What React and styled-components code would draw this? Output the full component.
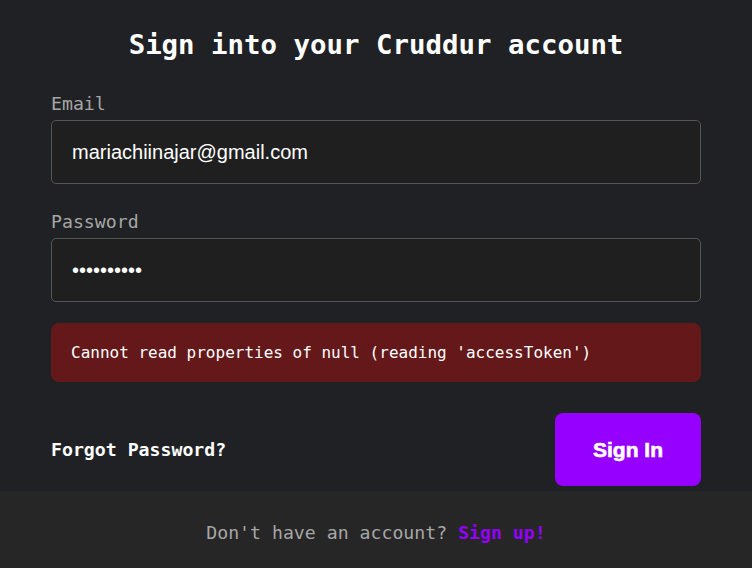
import React from "react";
import styled, { createGlobalStyle } from "styled-components";

const Global = createGlobalStyle`
  html, body { margin: 0; padding: 0; background: #202124; }
  body { font-family: "DejaVu Sans Mono", "Liberation Mono", monospace; }
  * { box-sizing: border-box; }
`;

const Page = styled.div`
  width: 752px;
  display: flex;
  flex-direction: column;
  background: #202124;
`;

const Form = styled.form`
  display: flex;
  flex-direction: column;
  padding: 25px 51px 5px;
`;

const Title = styled.h2`
  margin: 0 0 28px;
  text-align: center;
  color: #ffffff;
  font-size: 27.4px;
  font-weight: bold;
  line-height: 40px;
`;

const Field = styled.div`
  display: flex;
  flex-direction: column;
  gap: 5px;
  margin-bottom: ${(p) => p.$space}px;
`;

const Label = styled.label`
  color: #a6a6a6;
  font-size: 18.2px;
  line-height: 22px;
`;

const Input = styled.input`
  height: 64px;
  width: 100%;
  background: #1f1f1f;
  border: 1px solid #555555;
  border-radius: 5px;
  padding: 0 20px;
  color: #ffffff;
  font-family: "Liberation Sans", Arial, sans-serif;
  font-size: 20px;
  outline: none;
`;

const ErrorBox = styled.div`
  height: 59px;
  background: #65181a;
  border-radius: 8px;
  display: flex;
  align-items: center;
  padding: 0 20px;
  color: #ffffff;
  font-size: 16px;
`;

const Actions = styled.div`
  display: flex;
  justify-content: space-between;
  align-items: center;
  margin-top: 31px;
`;

const Forgot = styled.a`
  color: #ffffff;
  font-weight: bold;
  font-size: 18.2px;
  text-decoration: none;
`;

const Button = styled.button`
  width: 146px;
  height: 73px;
  background: #9500ff;
  border: none;
  border-radius: 8px;
  color: #ffffff;
  font-family: "Liberation Sans", Arial, sans-serif;
  font-weight: 900;
  font-size: 21px;
  -webkit-text-stroke: 0.6px #fff;
`;

const Footer = styled.div`
  height: 78px;
  padding-top: 5px;
  background: #262626;
  display: flex;
  align-items: center;
  justify-content: center;
  color: #a6a6a6;
  font-size: 18.2px;
  white-space: pre;
`;

const SignUp = styled.a`
  color: #9500ff;
  font-weight: bold;
  text-decoration: none;
`;

export default function App() {
  return (
    <Page>
      <Global />
      <Form onSubmit={(e) => e.preventDefault()}>
        <Title>Sign into your Cruddur account</Title>
        <Field $space={27}>
          <Label>Email</Label>
          <Input type="text" defaultValue="mariachiinajar@gmail.com" />
        </Field>
        <Field $space={21}>
          <Label>Password</Label>
          <Input type="password" defaultValue="1234567890" />
        </Field>
        <ErrorBox>Cannot read properties of null (reading 'accessToken')</ErrorBox>
        <Actions>
          <Forgot href="#">Forgot Password?</Forgot>
          <Button type="submit">Sign In</Button>
        </Actions>
      </Form>
      <Footer>
        <span>Don't have an account? </span>
        <SignUp href="#">Sign up!</SignUp>
      </Footer>
    </Page>
  );
}
